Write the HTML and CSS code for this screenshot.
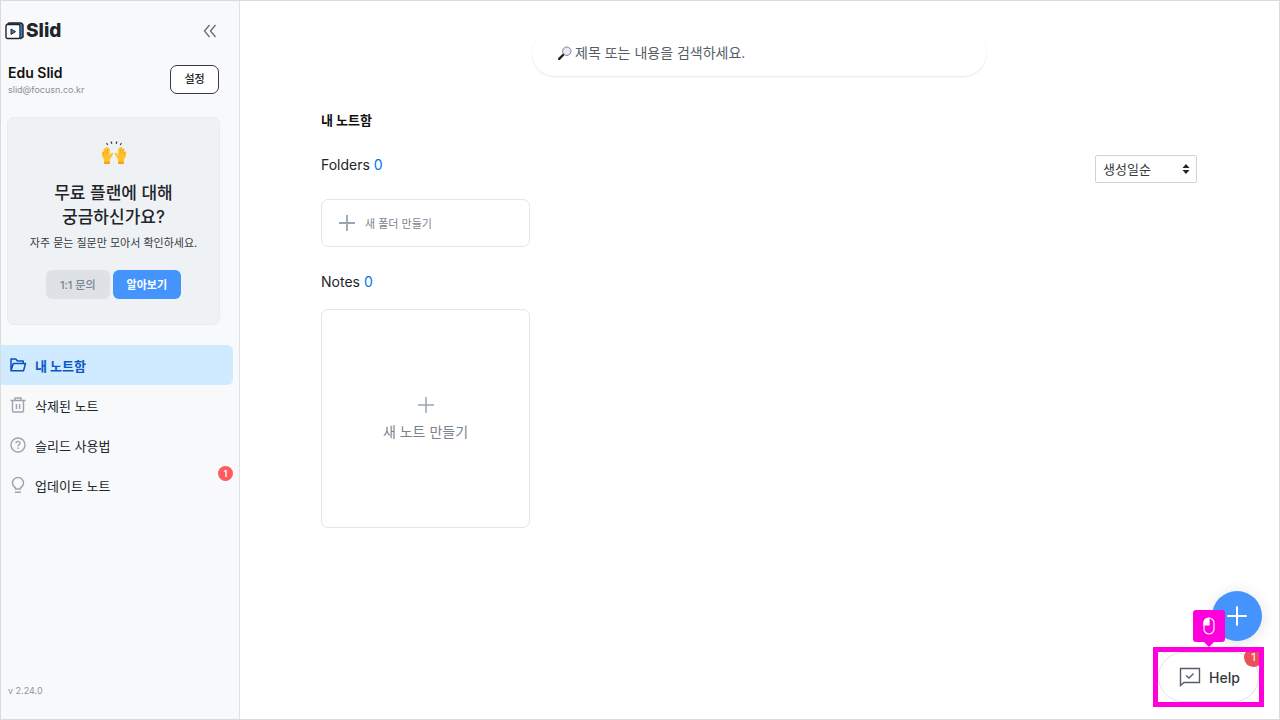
FILE: index.html
```html
<!DOCTYPE html>
<html lang="ko">
<head>
  <meta charset="UTF-8">
  <meta name="viewport" content="width=device-width, initial-scale=1.0">
  <title>Slid - 내 노트함</title>
  <link rel="stylesheet" href="styles.css">
</head>
<body>
  <div class="app">
    <aside class="sidebar">
      <div class="sidebar-top">
        <a href="#" class="logo">
          <svg width="19" height="18" viewBox="0 0 19 18" fill="none">
            <path d="M3 1h12.500a2.500 2.500 0 0 1 2.500 2.500V15l-2.500 2V3.500L3 3z" fill="#2f7de1"/>
            <rect x="1" y="2.500" width="14" height="14" rx="1.500" fill="#fff" stroke="#212529" stroke-width="1.400"/>
            <path d="M2 2.500 4 1h11.500a2.500 2.500 0 0 1 2.500 2.500V15l-3 1.800" stroke="#212529" stroke-width="1.400"/>
            <path d="M6 7l4.500 2.700L6 12.400z" fill="#2f7de1" stroke="#212529" stroke-width="1"/>
          </svg>
          <span>Slid</span>
        </a>
        <button type="button" class="icon-btn" aria-label="사이드바 닫기">
          <svg width="14" height="14" viewBox="0 0 14 14" fill="none" stroke="#5f6b76" stroke-width="1.300">
            <path d="M6.500 1 1.500 7l5 6M12.500 1l-5 6 5 6"/>
          </svg>
        </button>
      </div>

      <div class="profile">
        <div>
          <p class="profile-name">Edu Slid</p>
          <p class="profile-email">slid@focusn.co.kr</p>
        </div>
        <button type="button" class="setting-btn">설정</button>
      </div>

      <div class="plan-card">
        <!-- raised hands -->
        <svg width="26" height="24" viewBox="0 0 26 24">
          <g stroke="#3b3f45" stroke-width="1.300" stroke-linecap="round">
            <path d="M6.500 3.500 5.800 2.500M10.700 2.300 10.300 1M15.300 2.300l.4-1.300M19.500 3.500l.7-1"/>
          </g>
          <g id="hand">
            <path d="M3.200 23v-4.200C1.500 17 .7 14.500.8 11.500c0-1.300 1.400-1.300 1.600-.1l.2-3c.1-1.500 1.700-1.500 1.800 0l.3-1.700c.2-1.400 1.900-1.300 1.900.1l.3 1c.3-1.200 1.900-1 1.800.3l.1 5.600 1.500-1.500c1-1 2.300-.2 1.600 1l-3.100 5.600V23z" fill="#ffc02c"/>
            <path d="M3.200 20.500h5.600V23H3.200z" fill="#f5a31f"/>
            <path d="M4.400 8.500v4M6.600 7.500v4.700M2.500 11.400v2" stroke="#ef9c16" stroke-width=".6"/>
          </g>
          <use href="#hand" transform="matrix(-1 0 0 1 26 0)"/>
        </svg>
        <h2>무료 플랜에 대해<br>궁금하신가요?</h2>
        <p>자주 묻는 질문만 모아서 확인하세요.</p>
        <div class="plan-actions">
          <button type="button" class="btn btn-gray">1:1 문의</button>
          <button type="button" class="btn btn-blue">알아보기</button>
        </div>
      </div>

      <nav class="menu">
        <a href="#" class="menu-item active">
          <svg width="18" height="18" viewBox="0 0 18 18" fill="none" stroke="currentColor" stroke-width="1.500" stroke-linejoin="round">
            <path d="M2 14.800V3h4.800l1.600 2h5.800v2.500M2 14.800 4.300 7.500h12.200l-2 7.300z"/>
          </svg>
          <span>내 노트함</span>
        </a>
        <a href="#" class="menu-item">
          <svg width="18" height="18" viewBox="0 0 18 18" fill="none" stroke="currentColor" stroke-width="1.400">
            <path d="M1.500 4.500h15M6 4.500V2h6v2.500M3.500 4.500V15q0 1 1 1h9q1 0 1-1V4.500M7.400 8v5M10.600 8v5"/>
          </svg>
          <span>삭제된 노트</span>
        </a>
        <a href="#" class="menu-item">
          <svg width="18" height="18" viewBox="0 0 18 18" fill="none" stroke="currentColor" stroke-width="1.400">
            <circle cx="9" cy="9" r="7"/>
            <path d="M7 7.300c0-2.600 4-2.500 4-.1 0 1.500-2 1.500-2 3.200M9 11.600v1.300"/>
          </svg>
          <span>슬리드 사용법</span>
        </a>
        <a href="#" class="menu-item">
          <svg width="18" height="18" viewBox="0 0 18 18" fill="none" stroke="currentColor" stroke-width="1.400">
            <path d="M6.500 13v-1.200C4.500 10.600 3.500 9 3.500 7a5.500 5.500 0 0 1 11 0c0 2-1 3.600-3 4.800V13zM6 16.200h6"/>
          </svg>
          <span>업데이트 노트</span>
          <span class="badge">1</span>
        </a>
      </nav>

      <p class="version">v 2.24.0</p>
    </aside>

    <main class="content">
      <label class="search">
        <svg width="14" height="14" viewBox="0 0 14 14" fill="none">
          <path d="M1.200 12.800 6 8" stroke="#222" stroke-width="2.400" stroke-linecap="round"/>
          <circle cx="8.800" cy="5.200" r="4.200" fill="#e6ecf1" stroke="#7d858d" stroke-width="1"/>
        </svg>
        <input type="text" placeholder="제목 또는 내용을 검색하세요." aria-label="검색">
      </label>

      <h1>내 노트함</h1>

      <div class="section-head">
        <h3>Folders <span>0</span></h3>
        <div class="sort">
          <select aria-label="정렬">
            <option>생성일순</option>
            <option>수정일순</option>
          </select>
          <svg width="8" height="10" viewBox="0 0 8 10" fill="#212529">
            <path d="M4 0l3.500 4h-7zM4 10 .5 6h7z"/>
          </svg>
        </div>
      </div>

      <button type="button" class="new-folder">
        <svg width="16" height="16" viewBox="0 0 16 16" stroke="#9aa5af" stroke-width="1.800">
          <path d="M8 0v16M0 8h16"/>
        </svg>
        <span>새 폴더 만들기</span>
      </button>

      <h3>Notes <span>0</span></h3>

      <button type="button" class="new-note">
        <svg width="16" height="16" viewBox="0 0 16 16" stroke="#9aa5af" stroke-width="1.500">
          <path d="M8 0v16M0 8h16"/>
        </svg>
        <span>새 노트 만들기</span>
      </button>
    </main>

    <!-- floating buttons -->
    <button type="button" class="fab" aria-label="새로 만들기">
      <svg width="20" height="20" viewBox="0 0 20 20" stroke="#fff" stroke-width="2" stroke-linecap="round">
        <path d="M10 1v18M1 10h18"/>
      </svg>
    </button>

    <div class="help-frame">
      <button type="button" class="help-btn">
        <svg width="22" height="20" viewBox="0 0 22 20" fill="none" stroke="#545e68" stroke-width="1.400">
          <path d="M1.500 18.500V1.500h19v14H5zM7 8.500l3 2.500 4.500-4.500"/>
        </svg>
        <span>Help</span>
      </button>
      <span class="help-badge">1</span>
    </div>

    <div class="click-tip">
      <svg width="12" height="18" viewBox="0 0 12 18" fill="none" stroke="#fff" stroke-width="1.200">
        <rect x="1" y="1" width="10" height="16" rx="5"/>
        <path d="M6 1v7H1V6a5 5 0 0 1 5-5z" fill="#fff"/>
      </svg>
    </div>
  </div>
</body>
</html>
```
FILE: styles.css
```css
* {
  margin: 0;
  padding: 0;
  box-sizing: border-box;
}
body {
  font-family: Inter, "Noto Sans CJK KR", sans-serif;
  font-size: 13px;
  color: #212529;
  background: #fff;
}
button, input, select {
  font-family: inherit;
}
button {
  cursor: pointer;
}
a {
  color: inherit;
  text-decoration: none;
}
svg {
  display: block;
  flex-shrink: 0;
}
.app {
  display: flex;
  position: relative;
  min-height: 100vh;
  border: 1px solid #d9dbdd;
}

/* Sidebar */
.sidebar {
  display: flex;
  flex-direction: column;
  width: 239px;
  flex-shrink: 0;
  background: #f8f9fb;
  border-right: 1px solid #dee2e6;
}
.sidebar-top {
  display: flex;
  align-items: center;
  justify-content: space-between;
  padding: 18px 20px 0 4px;
}
.logo {
  display: flex;
  align-items: center;
  gap: 2px;
  font-size: 19px;
  line-height: 24px;
  font-weight: 800;
}
.icon-btn {
  padding: 2px;
  border: none;
  background: none;
}
.profile {
  display: flex;
  align-items: flex-start;
  justify-content: space-between;
  padding: 22px 20px 0 7px;
}
.profile-name {
  font-size: 14px;
  line-height: 16px;
  font-weight: 600;
  color: #111;
}
.profile-email {
  margin-top: 1px;
  font-size: 9px;
  line-height: 16px;
  color: #8a9097;
}
.setting-btn {
  width: 49px;
  height: 29px;
  border: 1px solid #343a40;
  border-radius: 7px;
  background: #fff;
  font-size: 11px;
  line-height: 16px;
  padding-bottom: 2px;
  font-weight: 500;
  color: #212529;
}
.plan-card {
  display: flex;
  flex-direction: column;
  align-items: center;
  margin: 19px 19px 20px 6px;
  padding: 23px 8px 25px;
  border: 1px solid #e9ecef;
  border-radius: 7px;
  background: #eff2f5;
  text-align: center;
}
.plan-card h2 {
  margin-top: 16px;
  font-size: 17px;
  line-height: 24px;
  font-weight: 500;
}
.plan-card p {
  margin-top: 6px;
  font-size: 11px;
  line-height: 16px;
  color: #343a40;
}
.plan-actions {
  display: flex;
  gap: 3px;
  margin-top: 19px;
}
.btn {
  height: 29px;
  padding: 0 14px 2px;
  border: none;
  border-radius: 6px;
  font-size: 11px;
  font-weight: 500;
}
.btn-gray {
  background: #dee2e6;
  color: #7b848c;
}
.btn-blue {
  background: #4593fc;
  color: #fff;
  font-weight: 700;
}
.menu {
  display: flex;
  flex-direction: column;
}
.menu-item {
  display: flex;
  position: relative;
  align-items: center;
  gap: 8px;
  height: 40px;
  margin-right: 6px;
  padding-left: 8px;
}
.menu-item svg {
  color: #9aa5af;
}
.menu-item.active {
  border-radius: 0 6px 6px 0;
  background: #d0ebff;
  color: #0b57c5;
  font-weight: 700;
}
.menu-item.active svg {
  color: #0b4fc0;
}
.badge {
  position: absolute;
  top: 1px;
  right: 0;
  width: 15px;
  height: 15px;
  border-radius: 50%;
  background: #ff5a5f;
  color: #fff;
  font-size: 9px;
  line-height: 15px;
  font-weight: 600;
  text-align: center;
}
.version {
  margin-top: auto;
  padding: 0 0 20px 7px;
  font-size: 9px;
  line-height: 16px;
  color: #8f959b;
}

/* Main */
.content {
  flex: 1;
  padding: 29px 82px 40px 81px;
}
.search {
  display: flex;
  align-items: center;
  gap: 3px;
  max-width: 454px;
  height: 46px;
  margin: 0 auto;
  padding: 0 26px;
  border-radius: 23px;
  background: #fff;
  box-shadow: 0 1px 2px rgba(0, 0, 0, 0.1);
}
.search input {
  flex: 1;
  padding-bottom: 2px;
  border: none;
  outline: none;
  background: none;
  font-size: 14px;
}
.search input::placeholder {
  color: #555e67;
}
.content h1 {
  margin-top: 34px;
  font-size: 13px;
  line-height: 20px;
  font-weight: 700;
  color: #111;
}
.section-head {
  display: flex;
  justify-content: space-between;
  align-items: flex-start;
  margin-top: 25px;
}
.content h3 {
  font-size: 14px;
  line-height: 20px;
  font-weight: 400;
}
.content h3 span {
  color: #0075eb;
}
.sort {
  position: relative;
}
.sort select {
  display: block;
  appearance: none;
  width: 102px;
  height: 28px;
  padding: 0 24px 0 7px;
  border: 1px solid #ced4da;
  border-radius: 2px;
  background: #fff;
  color: #343a40;
  font-size: 13px;
}
.sort svg {
  position: absolute;
  top: 9px;
  right: 7px;
  pointer-events: none;
}
.new-folder {
  display: flex;
  align-items: center;
  gap: 10px;
  width: 209px;
  height: 48px;
  margin: 16px 0 25px;
  padding-left: 17px;
  border: 1px solid #e3e6e9;
  border-radius: 7px;
  background: #fff;
  color: #7b848c;
  font-size: 11px;
}
.new-note {
  display: flex;
  flex-direction: column;
  align-items: center;
  justify-content: center;
  gap: 8px;
  width: 209px;
  height: 219px;
  margin-top: 17px;
  border: 1px solid #e3e6e9;
  border-radius: 7px;
  background: #fff;
  color: #7b848c;
  font-size: 14px;
}

/* Floating */
.fab {
  display: flex;
  position: absolute;
  right: 17px;
  bottom: 78px;
  align-items: center;
  justify-content: center;
  width: 50px;
  height: 50px;
  border: none;
  border-radius: 50%;
  background: #4593fc;
  box-shadow: 0 2px 16px rgba(0, 0, 0, 0.12);
}
.help-frame {
  position: absolute;
  right: 15px;
  bottom: 12px;
  width: 111px;
  height: 60px;
  border: 5px solid #ff00dd;
  background: #fff;
  overflow: hidden;
}
.help-btn {
  display: flex;
  align-items: center;
  justify-content: center;
  gap: 8px;
  width: 100%;
  height: 100%;
  padding-left: 2px;
  border: 1px solid #dee2e6;
  border-radius: 26px;
  background: #fff;
  color: #343a40;
  font-size: 14px;
  font-weight: 500;
}
.help-badge {
  position: absolute;
  top: -4px;
  right: -4px;
  width: 19px;
  height: 19px;
  border-radius: 50%;
  background: #eb4f58;
  color: #fff;
  font-size: 11px;
  line-height: 19px;
  text-align: center;
}
.click-tip {
  display: flex;
  position: absolute;
  right: 54px;
  bottom: 77px;
  align-items: center;
  justify-content: center;
  width: 32px;
  height: 32px;
  border-radius: 3px;
  background: #ff00dd;
}
.click-tip::after {
  content: "";
  position: absolute;
  top: 100%;
  left: 11px;
  border: 5px solid transparent;
  border-top-color: #ff00dd;
  border-bottom: none;
}
```
